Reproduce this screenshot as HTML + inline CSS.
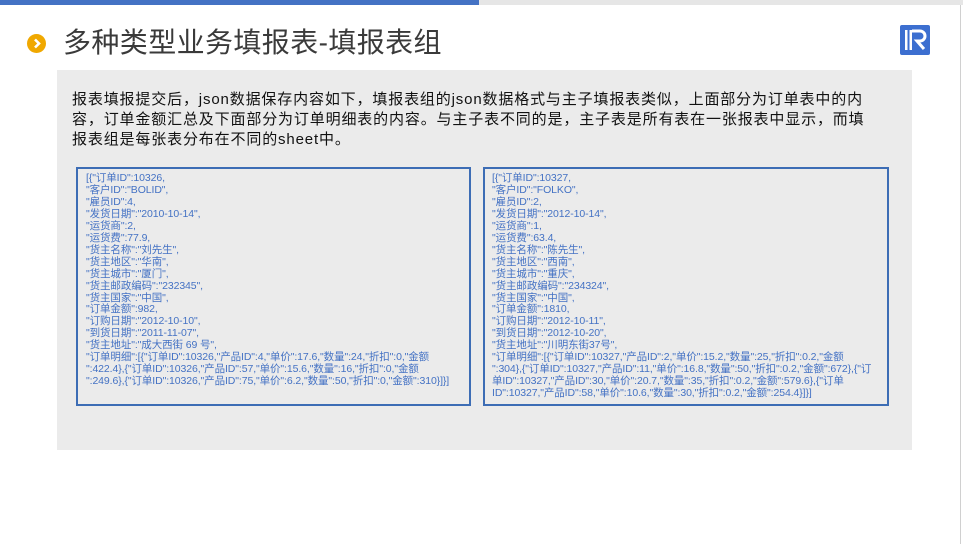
<!DOCTYPE html>
<html><head><meta charset="utf-8"><style>
*{margin:0;padding:0;box-sizing:border-box}
body{width:963px;height:544px;background:#fff;position:relative;overflow:hidden;font-family:"Liberation Sans","Noto Sans CJK SC",sans-serif}
.top{position:absolute;left:0;top:0;width:963px;height:5px;background:#e6e6e6}
.top i{position:absolute;left:0;top:0;width:479px;height:5px;background:#4472c4}
.rb{position:absolute;right:2px;top:5px;width:1px;height:539px;background:#d0d0d0}
.dot{position:absolute;left:27px;top:34px;width:19px;height:19px;border-radius:50%;background:#f0a800}
.title{position:absolute;left:63px;top:24px;font-size:28px;color:#3a3a3a;line-height:38px;white-space:nowrap;letter-spacing:0.4px}
.panel{position:absolute;left:57px;top:70px;width:855px;height:380px;background:#ebebeb}
.p{position:absolute;left:72px;top:90px;width:830px;font-size:15px;line-height:20px;color:#111;white-space:nowrap;letter-spacing:0.85px}
.box{position:absolute;top:167px;height:239px;border:2px solid #3d6db5;padding:4px 0 0 8px;font-size:10.5px;line-height:11.95px;color:#4472c4;white-space:pre;letter-spacing:-0.1px}
</style></head><body>
<div class="top"><i></i></div><div class="rb"></div>
<div class="dot"><svg width="19" height="19" viewBox="0 0 19 19"><path d="M8 5.5l4 4-4 4" stroke="#fff" stroke-width="2.6" fill="none"/></svg></div>
<div class="title">多种类型业务填报表-填报表组</div>
<svg style="position:absolute;left:900px;top:25px" width="30" height="30" viewBox="0 0 30 30"><rect width="30" height="30" rx="2" fill="#3c6fd0"/><rect x="5" y="5" width="2.5" height="20" fill="#fff"/><rect x="9.5" y="5" width="2.5" height="20" fill="#fff"/><path d="M12 6h8a5 5 0 0 1 0 10h-3l7 8" stroke="#fff" stroke-width="3" fill="none"/></svg>
<div class="panel"></div>
<div class="p">报表填报提交后，json数据保存内容如下，填报表组的json数据格式与主子填报表类似，上面部分为订单表中的内<br>容，订单金额汇总及下面部分为订单明细表的内容。与主子表不同的是，主子表是所有表在一张报表中显示，而填<br>报表组是每张表分布在不同的sheet中。</div>
<div class="box" style="left:76px;width:395px">[{"订单ID":10326,
"客户ID":"BOLID",
"雇员ID":4,
"发货日期":"2010-10-14",
"运货商":2,
"运货费":77.9,
"货主名称":"刘先生",
"货主地区":"华南",
"货主城市":"厦门",
"货主邮政编码":"232345",
"货主国家":"中国",
"订单金额":982,
"订购日期":"2012-10-10",
"到货日期":"2011-11-07",
"货主地址":"成大西街 69 号",
"订单明细":[{"订单ID":10326,"产品ID":4,"单价":17.6,"数量":24,"折扣":0,"金额
":422.4},{"订单ID":10326,"产品ID":57,"单价":15.6,"数量":16,"折扣":0,"金额
":249.6},{"订单ID":10326,"产品ID":75,"单价":6.2,"数量":50,"折扣":0,"金额":310}]}]</div>
<div class="box" style="left:483px;width:406px;padding-left:7px">[{"订单ID":10327,
"客户ID":"FOLKO",
"雇员ID":2,
"发货日期":"2012-10-14",
"运货商":1,
"运货费":63.4,
"货主名称":"陈先生",
"货主地区":"西南",
"货主城市":"重庆",
"货主邮政编码":"234324",
"货主国家":"中国",
"订单金额":1810,
"订购日期":"2012-10-11",
"到货日期":"2012-10-20",
"货主地址":"川明东街37号",
"订单明细":[{"订单ID":10327,"产品ID":2,"单价":15.2,"数量":25,"折扣":0.2,"金额
":304},{"订单ID":10327,"产品ID":11,"单价":16.8,"数量":50,"折扣":0.2,"金额":672},{"订
单ID":10327,"产品ID":30,"单价":20.7,"数量":35,"折扣":0.2,"金额":579.6},{"订单
ID":10327,"产品ID":58,"单价":10.6,"数量":30,"折扣":0.2,"金额":254.4}]}]</div>
</body></html>
